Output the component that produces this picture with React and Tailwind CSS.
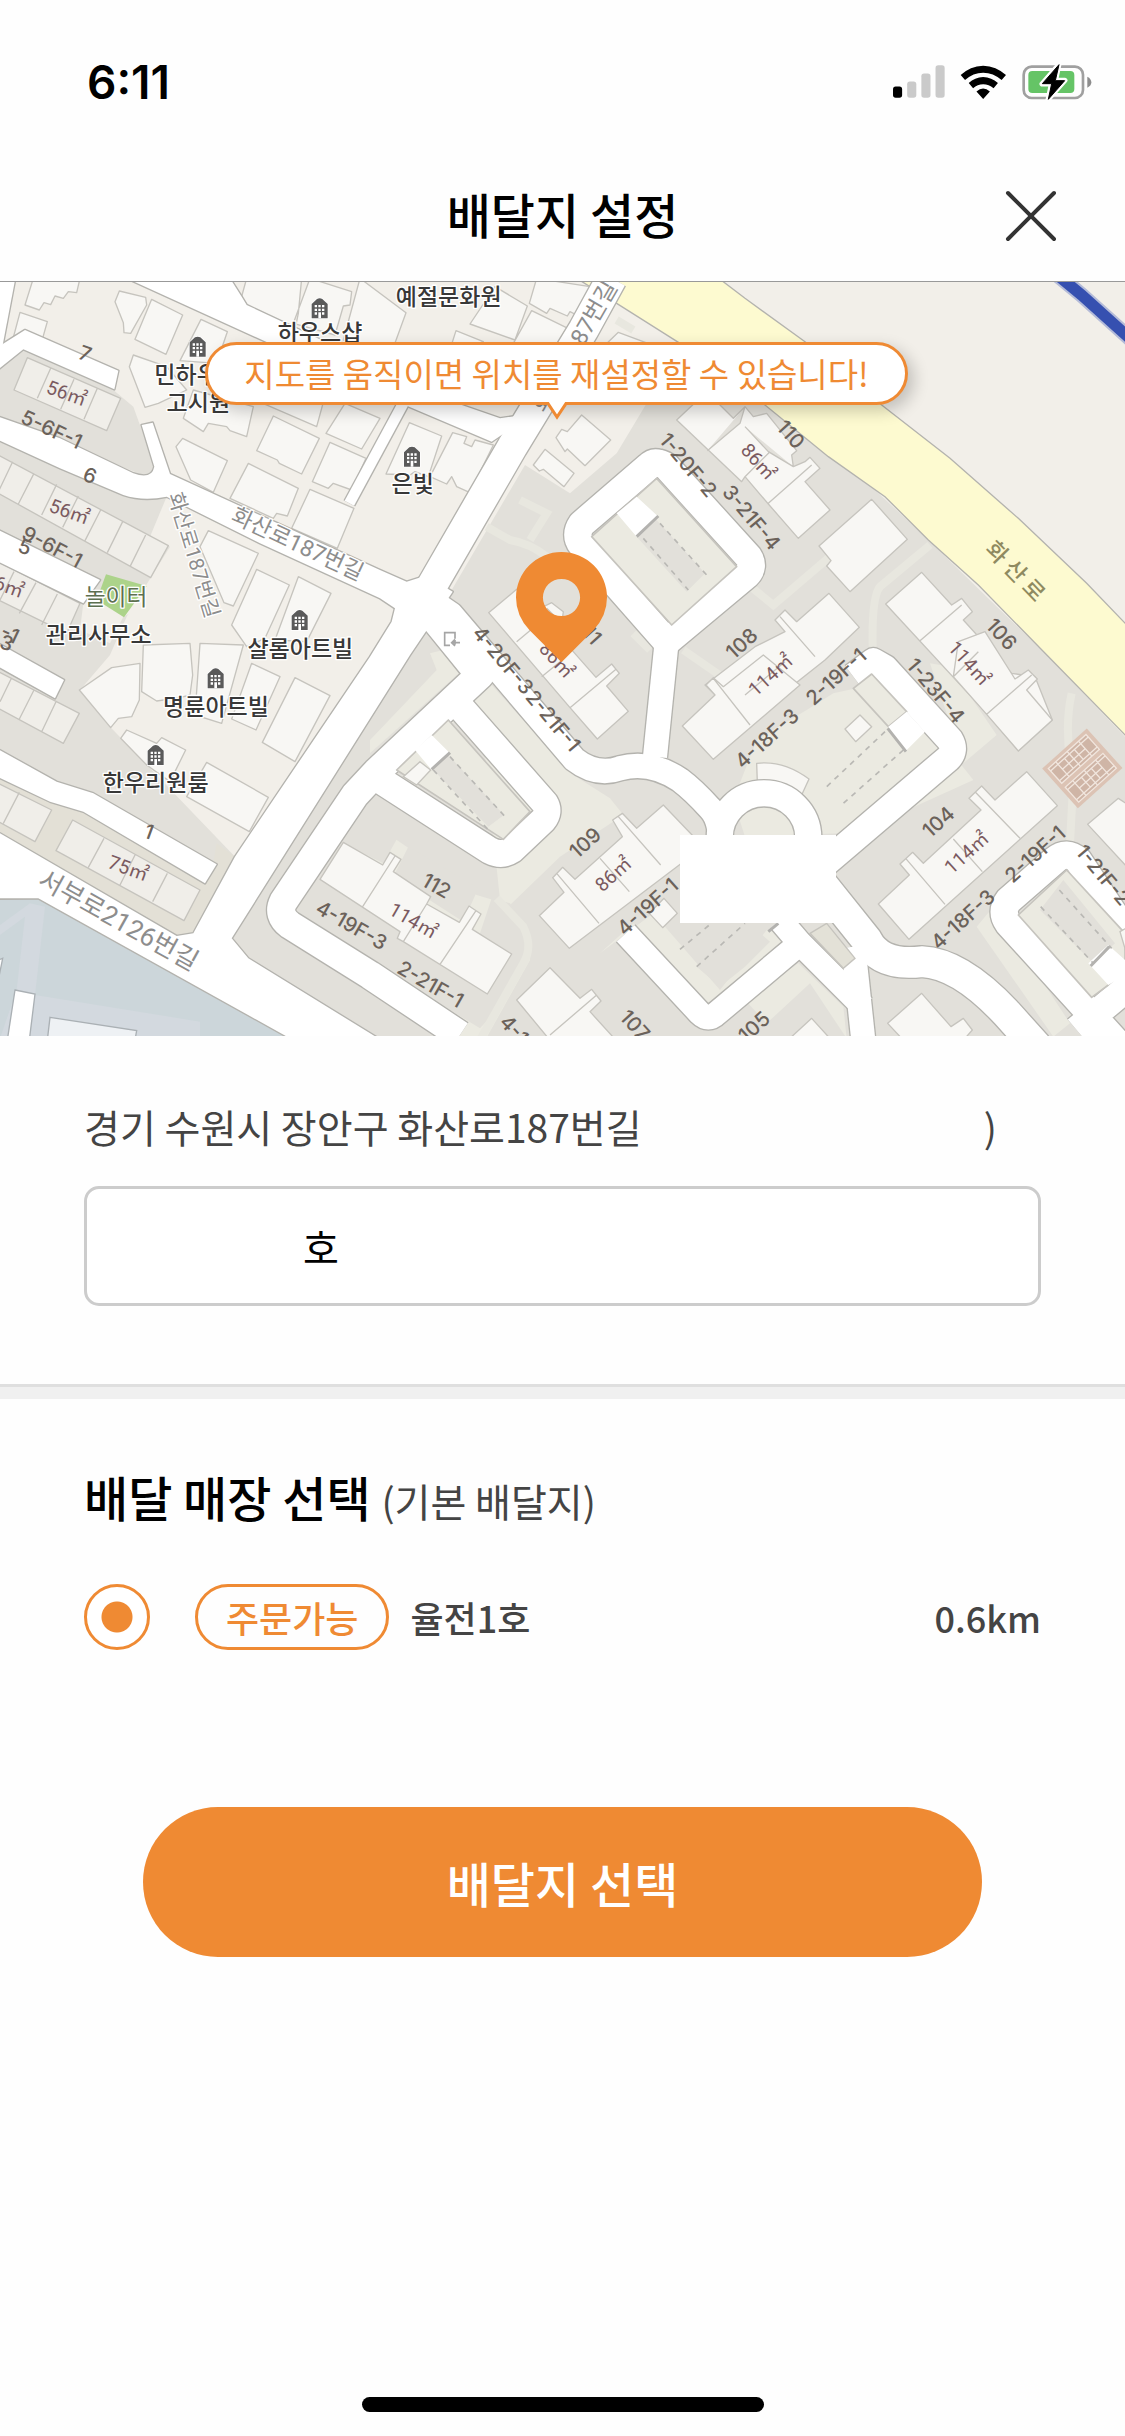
import React from "react";

const GROUND = "#e2e0da";
const GRASS = "#ebeae1";
const HOUSE = "#f8f7f4";
const FLAT = "#f0eee9";
const EDGE = "#c6c4be";
const ROAD_EDGE = "#b4b3ae";

/* Map drawing units are thirds of a pixel at full width. */

const roads = [
  { d: "M1835 -5L1750 150L1537 500L1300 910L1250 1000", w: 90 },
  { d: "M1185 985L1175 1025L1110 1130L705 1730L580 1960L530 1968L0 1660V1855L115 1855L870 2275H1135L745 2035L695 1975L1230 1125L1358 935L1300 900Z" },
  { d: "M-5 410L180 475L400 580Q455 600 463 560L425 435L458 428L510 582L1140 870L1220 905L1300 880L1270 1000L1185 985L1140 955L780 790L500 650Q430 665 370 645L180 565L-5 480Z" },
  { d: "M-5 200L75 150L355 272L343 328L70 208L-5 268Z" },
  { d: "M-5 750L300 900L250 970L-5 845Z" },
  { d: "M-5 1090L192 1200L165 1255L-5 1160Z" },
  { d: "M-5 1408L170 1505L280 1540L650 1753L615 1810L250 1595L150 1565L-5 1492Z" },
  { d: "M380 -5L1215 375L1475 485L1600 400L1500 415L1370 370L740 75L725 50L690 -5Z" },
  { d: "M1210 370L1048 670", w: 32 },
  { d: "M-5 -5H46L8 195L-5 205Z" },
  { d: "M1975 550Q1960 545 1945 560L1745 732Q1722 765 1745 795L2000 1085L2240 885Q2265 860 2245 830L2000 560Q1985 550 1975 550Z", w: 82 },
  { d: "M2000 1085L1965 1430", w: 72 },
  { d: "M1290 960L1353 1003L1723 1438Q1790 1490 1860 1465Q1950 1440 2040 1500Q2080 1530 2130 1585Q2165 1620 2162 1720", w: 73 },
  { d: "M1290 1000L1440 1185L1130 1475L1065 1545L850 1865Q830 1905 870 1935L1110 2085L1380 2265", w: 84 },
  { d: "M1380 1280L1635 1570Q1650 1595 1630 1620L1535 1710Q1505 1730 1470 1712L1140 1500", w: 80 },
  { d: "M2292 1540A133 133 0 0 0 2159 1673V1760M2292 1540A133 133 0 0 1 2425 1673V1760", w: 78 },
  { d: "M2560 1190L2620 1145L2655 1165L2850 1380Q2868 1410 2845 1435L2440 1780", w: 80 },
  { d: "M2440 1780L2600 1980Q2640 2060 2765 2045Q2880 2050 3020 2200L3110 2300", w: 92 },
  { d: "M2560 2000L2592 2300", w: 72 },
  { d: "M1877 1960L2100 2200Q2125 2225 2150 2200L2400 1990L2590 2180M2400 1990L2340 1920", w: 72 },
  { d: "M3440 2050L3235 1742Q3200 1710 3165 1740L3025 1862Q3000 1895 3025 1930L3380 2320M3230 2250L3420 2090", w: 82 },
];

const notches =
  "M1850 700L1910 650L1975 710L1910 770ZM1245 1410L1295 1365L1350 1420L1295 1470ZM2665 1340L2720 1295L2775 1355L2715 1415ZM3265 2050L3325 1995L3375 2040V2085L3325 2115Z";

/* Each sheet holds building outlines relative to its own corner. */
const sheets = [
  {
    x: 0, y: 0, fill: HOUSE,
    d: "M100 -5L75 75L118 90L132 68L152 74L165 48L190 55L205 35L230 38L240 -5ZM60 97L142 125L118 210L38 180ZM358 33L437 52L440 75L392 160L372 158L370 128L345 65ZM455 58L548 105L498 223L405 178ZM603 118L682 155L650 250L540 242ZM400 225L500 260L560 330L475 370L435 382L388 260ZM580 330L760 380L740 470L690 452L680 440L625 430L610 455L550 415ZM820 408L958 475L905 582L838 550L832 540L770 512ZM548 475L682 542L640 637L572 600L528 500ZM745 550L895 625L862 708L830 700L820 715L690 655ZM990 487L1098 535L1055 630L1000 610L985 625L937 605ZM930 628L1062 685L1012 805L875 745ZM1035 370L1140 415L1085 507L978 460ZM740 -5L722 60L730 75L885 148L895 100L905 -5ZM930 -5L1055 35L1050 75L1030 78L1005 165L880 130ZM1110 48L1160 60V280L1040 230ZM830 270L980 330L950 440L720 340ZM625 752L775 820L700 978L672 968L600 800ZM770 868L868 915L795 1075L740 1100L695 1035ZM895 890L993 940L920 1085L825 1080ZM590 -5L640 25L690 10L700 -5Z",
  },
  {
    x: 0, y: 0, fill: FLAT,
    d: "M82 233L362 355L320 452L42 330ZM152 265L112 355M222 298L182 388M292 325L252 418M-5 525L505 797L452 893L-5 640ZM38 545L-5 635M102 580L55 672M170 613L125 705M235 648L188 742M302 690L255 782M368 725L322 818M437 765L390 860M-5 845L240 970L200 1060L-5 960ZM42 875L0 960M108 908L58 1000M172 942L125 1035",
  },
  {
    x: 1110, y: 0, fill: HOUSE,
    d: "M-30 -5L108 98L60 230L-80 180ZM375 20L472 78L435 180L300 132ZM500 -5L660 20L620 105L600 95L592 108L540 85L530 100L478 70ZM485 92L600 148L560 215L430 190ZM258 152L340 185L230 240ZM745 157L860 200L700 200ZM635 405L722 480L645 557L592 507L585 515L558 473L575 448L592 455ZM525 508L612 580L582 620L520 568L508 573L490 555ZM118 428L215 468L175 590L135 575L120 585L48 582ZM248 458L290 470L282 490L305 500L315 480L370 495L300 638L260 620L245 590L230 612L180 590Z",
  },
  {
    x: 1110, y: 0, fill: HOUSE,
    d: "M920 420L1010 335L1090 415L1125 380L1150 410L1190 400L1280 512L1265 525L1270 560L1305 545L1320 532L1350 565L1305 605L1380 690L1285 775L1195 672L1125 590L1115 605ZM1012 512L1110 430L1125 380M1195 670L1325 555M1125 590L1200 515M1125 440L1195 515L1270 560",
  },
  {
    x: 1110, y: 780, fill: HOUSE,
    d: "M356 218L440 148L500 210L545 188L580 215L570 290L678 412L725 372L748 400L710 438L775 514L682 597L600 503ZM440 305L500 255M515 410L570 365M600 503L738 388M530 205L560 235",
  },
  {
    x: 2235, y: 0, fill: HOUSE,
    d: "M380 658L487 778L315 935L245 858L258 842L222 798ZM120 990L155 1025L252 940L343 1042L240 1140L0 1330L-120 1215L30 1100L120 1055L90 1020ZM530 877L620 975L650 955L682 995L655 1020L800 1180L870 1190L922 1320L820 1412L725 1300L422 972ZM525 1082L650 975M725 1302L845 1190M625 1190L720 1100M105 1010L210 1130M0 1180L125 1240M40 1140L120 1230",
  },
  {
    x: 0, y: 1125, fill: HOUSE,
    d: "M335 38L420 25L418 135L395 185L355 190L332 218L238 105ZM430 -30L570 -35L578 60L570 120L540 128L470 138L425 110ZM600 -35L730 -30L665 205L585 180ZM755 25L840 65L768 225L695 192ZM885 68L990 122L885 320L787 262ZM380 225L470 265L485 248L557 285L510 380L440 330L362 250ZM620 322L805 427L748 530L560 425Z",
  },
  {
    x: 0, y: 1125, fill: FLAT,
    d: "M-5 50L238 175L190 265L-5 160ZM35 68L0 140M102 105L58 192M168 140L125 230M-5 385L155 465L105 560L-5 500ZM58 412L10 505M218 495L600 705L552 797L168 587ZM312 550L265 637M405 600L360 690M502 655L458 740",
  },
  {
    x: 780, y: 1500, fill: HOUSE,
    d: "M250 187L368 255L390 217L423 238L400 275L512 350L500 372L598 427L627 378L663 402L637 448L755 522L682 642L430 485L412 475L420 455L180 298ZM405 228L308 380M500 372L430 485M648 392L540 553",
  },
  {
    x: 1110, y: 1125, fill: HOUSE,
    d: "M1060 95L1180 0L1290 90L1030 313L937 213L1035 120L1008 90L1030 68ZM1030 70L1140 210M728 495L757 475L800 520L880 450L1000 575L598 880L508 782L582 712L548 668L578 637L615 673L757 545ZM745 485L872 630M560 655L687 805M690 610L778 710M540 938L630 1030L665 1003L693 1038L660 1070L760 1180H560L440 1035ZM540 1140L680 1020M882 730L922 775L878 818L838 775Z",
  },
  {
    x: 2235, y: 1125, fill: HOUSE,
    d: "M345 180L380 215L332 260L300 222ZM35 325Q115 315 192 372L170 420Q110 380 37 382ZM672 430L710 393L750 435L845 350L937 452L492 853L400 747L493 660L465 627L503 592L535 625L708 465ZM690 410L825 550M482 610L600 748M625 552L712 650M1120 430L1150 450V640L1028 508ZM530 1015L618 1115L655 1090L682 1125L660 1150H470L428 1105ZM200 1090L250 1145H140ZM640 -40L720 -70L810 72L850 45L877 72L845 105L922 195L820 288L725 178L625 65ZM725 178L860 60M625 65L700 -10M0 120L120 20",
  },
];

const dashes =
  "M1980 730L2120 885M1930 775L2065 930M1350 1430L1520 1615M1300 1470L1470 1655M2655 1355L2480 1520M2710 1410L2530 1570M2040 2008L2140 1925M2090 2060L2235 1930M3178 1830L3335 2005M3122 1880L3280 2050";

const barriers = "M1910 770L1975 708M1295 1468L1350 1418M2663 1345L2718 1415M3272 2058L3328 2000M2305 1955L2335 1930";

const places = [
  { t: "예절문화원", x: 1346, y: 74 },
  { t: "하우스샵", x: 960, y: 182 },
  { t: "민하우스", x: 590, y: 310 },
  { t: "고시원", x: 595, y: 392 },
  { t: "은빛", x: 1238, y: 637 },
  { t: "관리사무소", x: 296, y: 1090 },
  { t: "샬롬아트빌", x: 901, y: 1131 },
  { t: "명륜아트빌", x: 648, y: 1304 },
  { t: "한우리원룸", x: 467, y: 1534 },
];

const numbers = [
  { t: "7", x: 256, y: 220, r: 20 },
  { t: "6", x: 270, y: 586, r: 20 },
  { t: "5", x: 75, y: 800, r: 20 },
  { t: "3", x: 20, y: 1088, r: 20 },
  { t: "1", x: 447, y: 1655, r: 20 },
  { t: "5-6F-1", x: 155, y: 448, r: 25 },
  { t: "9-6F-1", x: 157, y: 800, r: 28 },
  { t: "-1", x: 30, y: 1062, r: 25 },
  { t: "110", x: 2373, y: 463, r: 48 },
  { t: "106", x: 3005, y: 1062, r: 48 },
  { t: "108", x: 2225, y: 1090, r: -42 },
  { t: "111", x: 1768, y: 1055, r: 48 },
  { t: "109", x: 1755, y: 1688, r: -42 },
  { t: "104", x: 2815, y: 1625, r: -42 },
  { t: "112", x: 1310, y: 1817, r: 30 },
  { t: "107", x: 1905, y: 2235, r: 48 },
  { t: "105", x: 2262, y: 2240, r: -42 },
  { t: "1-20F-2", x: 2065, y: 555, r: 50 },
  { t: "3-21F-4", x: 2255, y: 712, r: 50 },
  { t: "4-20F-3", x: 1510, y: 1140, r: 50 },
  { t: "2-21F-1", x: 1660, y: 1322, r: 50 },
  { t: "4-18F-3", x: 2300, y: 1375, r: -42 },
  { t: "2-19F-1", x: 2508, y: 1190, r: -42 },
  { t: "1-23F-4", x: 2808, y: 1232, r: 50 },
  { t: "4-19F-1", x: 1942, y: 1880, r: -42 },
  { t: "4-19F-3", x: 1055, y: 1935, r: 30 },
  { t: "2-21F-1", x: 1292, y: 2112, r: 30 },
  { t: "4-18F-3", x: 2888, y: 1918, r: -42 },
  { t: "2-19F-1", x: 3105, y: 1722, r: -42 },
  { t: "1-21F-2", x: 3310, y: 1785, r: 50 },
  { t: "4-19F-3", x: 1590, y: 2300, r: 48 },
];

const areas = [
  { t: "56㎡", x: 200, y: 340, r: 20 },
  { t: "56㎡", x: 208, y: 695, r: 20 },
  { t: "56㎡", x: 12, y: 915, r: 20 },
  { t: "75㎡", x: 385, y: 1765, r: 20 },
  { t: "86㎡", x: 2275, y: 545, r: 48 },
  { t: "86㎡", x: 1670, y: 1140, r: 48 },
  { t: "86㎡", x: 1840, y: 1782, r: -42 },
  { t: "114㎡", x: 1240, y: 1922, r: 30 },
  { t: "114㎡", x: 2312, y: 1185, r: -42 },
  { t: "114㎡", x: 2908, y: 1150, r: 48 },
  { t: "114㎡", x: 2900, y: 1718, r: -42 },
];

const streets = [
  { t: "화산로187번길", x: 892, y: 793, r: 25, s: 68 },
  { t: "화산로187번길", x: 582, y: 825, r: 73, s: 62 },
  { t: "화산로187번길", x: 1725, y: 200, r: -60, s: 70 },
  { t: "서부로2126번길", x: 353, y: 1925, r: 29, s: 78 },
];

const markers = [[593, 200], [959, 85], [899, 1020], [1236, 530], [647, 1195], [467, 1425]];

function MapArt() {
  return (
    <svg
      viewBox="0 6 3375 2262"
      className="block w-full font-['Roboto','Noto_Sans_CJK_KR',sans-serif]"
      role="img"
      aria-label="배달지 지도"
    >
      <rect width="3375" height="2280" fill="#f2efe9" />
      <path fill={GROUND} d="M0 265L70 210L340 330L400 380L465 560L440 590L0 410ZM0 480L500 650L450 770L510 800L452 893L380 1010L330 1125L240 1230L330 1340L705 1730L580 1960L530 1970L0 1660Z" />
      <path fill="#e3e0d6" d="M0 1480L280 1540L640 1750L650 1690L705 1730L580 1960L530 1970L0 1660Z" />
      <path fill="#f2efe9" d="M250 970L360 905L500 940L370 1010L330 1090L240 1050Z" />
      <path fill={GROUND} d="M1940 370L1850 520L1710 640L1575 555L1355 930L1230 1125L695 1975L745 2035L1150 2280H3375V1370L3140 1125L2785 780L2615 620L2295 375L2040 190Z" />
      <path fill={GRASS} d="M1470 1210L1720 1485L1830 1555L1870 1605L1680 1730L1530 1875L1430 1845L1220 1700L1110 1625L900 2000L1400 2290H1450L1590 2040L1570 1930L1500 1860L1440 1280L1100 1480L1200 1380L1320 1280L1400 1180Z" />
      <path fill={GRASS} d="M1110 1380L1310 1170L1290 1120L1330 1110L1410 1150L1110 1420Z" />
      <path fill={GROUND} d="M1080 1600L1192 1675L1150 1750L1030 1690ZM1225 1700L1435 1825L1390 1925L1180 1790ZM1475 1855L1530 1870L1590 1960L1570 2040L1500 2180L1440 2245L880 1900L960 1800L1440 1960Z" />
      <path fill={GRASS} d="M2270 1380L2420 1290L2500 1240L2590 1220L2830 1400L2520 1660L2235 1670L2200 1560ZM2890 1450L2990 1365L2850 1160L2790 1150ZM1800 2020L1900 1930L2120 2180L2380 1960L2300 1950L2160 2130L1960 1900ZM2930 1940L2980 1880L3210 2230L3160 2270ZM2650 1650L2700 1600L2920 1500L2880 1450L2700 1600ZM2235 2160L2395 2050L2530 2180L2540 2275L2430 2110L2300 2230Z" />
      <path fill="none" stroke="#e8e7df" strokeWidth="24" d="M1460 740L1530 780Q1590 790 1640 830L1740 900M1560 660L1640 700L1590 780M2240 910L2320 975L2490 830M2790 795L2640 920Q2615 950 2618 1100M1850 120L1900 150M1490 1855L1570 1940Q1600 2000 1570 2050L1440 2280M3215 1240Q3190 1350 3220 1500L3210 1690M1950 1110L1900 1060M2050 1110L2180 1200" />
      <path fill="#fdfad0" stroke={ROAD_EDGE} strokeWidth="4" d="M1730 -5L1850 70L2040 190L2295 375L2485 530L2655 650L2785 780L2935 915L3150 1135L3390 1380V1045L3260 910L3055 715L2850 535L2645 375L2415 185L2235 55L2150 -10Z" />
      <path fill="none" stroke="#b4bbd8" strokeWidth="46" d="M3172 -15L3245 45L3400 185" />
      <path fill="none" stroke="#3650b0" strokeWidth="34" d="M3172 -15L3245 45L3400 185" />

      <path fill="#ccd6da" stroke={ROAD_EDGE} strokeWidth="4" d="M-5 1858L115 1855L880 2275H-5Z" />
      <path fill="#d3d9df" d="M0 1935L90 1870L135 1880L105 2145L600 2225V2275H0L50 2130L75 1910L0 1965Z" />
      <path fill="#ffffff" stroke="#aab0b4" strokeWidth="4" d="M45 2130L105 2142L88 2280H22ZM-5 2040L8 2035L-5 2100Z" />
      <path fill="#eef1f4" stroke="#aab0b4" strokeWidth="4" d="M150 2212L410 2252L405 2280H142Z" />

      {sheets.map((s, i) => (
        <g key={i} transform={`translate(${s.x} ${s.y})`}>
          <path d={s.d} fill={s.fill} stroke={EDGE} strokeWidth="4" strokeLinejoin="round" />
        </g>
      ))}
      <path fill="#acd38a" d="M318 883L440 918L372 1012L290 960Z" />

      <g strokeLinejoin="round">
        {roads.map((r, i) => (
          <path key={i} d={r.d} fill={r.w ? "none" : "#fff"} stroke={ROAD_EDGE} strokeWidth={r.w ? r.w + 8 : 8} />
        ))}
        {roads.map((r, i) => (
          <path key={i} d={r.d} fill={r.w ? "none" : "#fff"} stroke="#fff" strokeWidth={r.w || 0} />
        ))}
      </g>
      <path fill={GRASS} stroke={EDGE} strokeWidth="5" strokeLinejoin="round" d="M1970 595L2210 860L2015 1035L1775 770ZM1345 1320L1590 1595L1510 1678L1190 1470ZM2615 1182L2720 1295L2665 1340L2560 1225ZM3200 1770L3375 1960V2070L3325 2115L3275 2152L3055 1905Z" />
      <path fill={GROUND} d="M1965 715L2115 880L2060 935L1910 770ZM1345 1425L1512 1605L1465 1640L1300 1470ZM2235 2060L2310 1985L2275 1955H2170L2090 2060L2160 2120ZM3190 1800L3345 1990L3280 2050L3120 1890Z" />
      <path fill="#e3e1d7" stroke={EDGE} strokeWidth="4" d="M2430 1960L2480 1930L2565 2035L2530 2065Z" />
      <path fill="#fff" d={notches} />
      <path fill={HOUSE} stroke={EDGE} strokeWidth="4" d="M1260 1445L1292 1470L1250 1515L1210 1490ZM3360 1955L3385 1940V2040Z" />
      <path fill="none" stroke="#b9b8b4" strokeWidth="5" strokeDasharray="16 16" d={dashes} />
      <path fill="none" stroke="#b3b2af" strokeWidth="9" d={barriers} />

      <g transform="translate(3247 1465) rotate(-42)">
        <rect x="-90" y="-80" width="180" height="160" fill="#dcc3b4" />
        <g fill="#cfb5a6" stroke="#f1e6de" strokeWidth="4">
          {[-68, 8].map((y) => (
            <g key={y}>
              <rect x="-76" y={y} width="152" height="60" />
              <path d={`M-76 ${y + 10}h152m0 40h-152M-46 ${y}v60M46 ${y}v60M-20 ${y + 10}v40M20 ${y + 10}v40M0 ${y}v60M-46 ${y + 30}h92`} />
            </g>
          ))}
        </g>
      </g>
      <path fill="none" stroke="#a5a5a5" strokeWidth="5" d="M1365 1076V1058H1334V1096H1350M1365 1094V1080M1380 1088H1357M1365 1078L1355 1088L1365 1098" />

      <rect x="2040" y="1665" width="468" height="264" fill="#fff" />

      <g textAnchor="middle" stroke="#fff" strokeWidth="8" strokeLinejoin="round" paintOrder="stroke">
        {streets.map((l, i) => (
          <text key={i} transform={`translate(${l.x} ${l.y}) rotate(${l.r})`} dy="22" fontSize={l.s} fill="#8d8d8d">{l.t}</text>
        ))}
        <text x="348" y="974" fontSize="68" fill="#5d7050">놀이터</text>
        {places.map((l) => (
          <text key={l.t} x={l.x} y={l.y} fontSize="69" fontWeight="500" fill="#383838">{l.t}</text>
        ))}
      </g>
      <g textAnchor="middle">
        <g fontSize="61" fill="#6b625a" fontWeight="500" className="font-['Inter',sans-serif]">
          {numbers.map((l, i) => (
            <text key={i} transform={`translate(${l.x} ${l.y}) rotate(${l.r})`} dy="22">{l.t}</text>
          ))}
        </g>
        <g fontSize="58" fill="#7a5a60">
          {areas.map((l, i) => (
            <text key={i} transform={`translate(${l.x} ${l.y}) rotate(${l.r})`} dy="20">{l.t}</text>
          ))}
        </g>
        <text transform="translate(3045 875) rotate(46)" dy="22" fontSize="68" fontWeight="500" fill="#8f8a60">화 산 로</text>
      </g>
      {markers.map(([x, y]) => (
        <g key={`${x}-${y}`} transform={`translate(${x - 24} ${y - 30})`}>
          <path fill="#5a5a5a" stroke="#fff" strokeWidth="4" paintOrder="stroke" d="M0 17L16 2Q24 -2 32 2L48 17V60H0Z" />
          <path fill="#fff" d="M9 20h7v7h-7zM20 20h7v7h-7zM31 20h7v7h-7zM9 31h7v7h-7zM20 31h7v7h-7zM31 31h7v7h-7zM9 42h7v7h-7zM31 42h7v7h-7zM20 42h8v18h-8z" />
        </g>
      ))}
    </svg>
  );
}

function StatusBar() {
  return (
    <div className="flex h-[150px] items-center justify-between pt-[14px] pr-[33px] pl-[87px]">
      <span className="font-['Inter',sans-serif] text-[46px] leading-none font-semibold text-black">6:11</span>
      <div className="flex items-center gap-[15px]">
        <svg viewBox="69 77 154 98" className="w-[52px]" aria-hidden="true">
          <rect x="69" y="141" width="27" height="33" rx="8" />
          <g fill="#cacaca">
            <rect x="111" y="126" width="27" height="48" rx="8" />
            <rect x="153" y="102" width="27" height="72" rx="8" />
            <rect x="195" y="78" width="27" height="96" rx="8" />
          </g>
        </svg>
        <svg viewBox="270 73 140 102" className="w-[47px]" aria-hidden="true">
          <path d="M339 75Q378 76 407 103L394 118Q369 96 339 96T285 118L272 103Q300 76 339 75ZM339 109Q364 110 383 127L370 142Q356 130 339 130T309 142L296 127Q314 110 339 109ZM339 143Q349 143 359 152L339 174L319 152Q329 143 339 143Z" />
        </svg>
        <svg viewBox="455 72 210 109" className="w-[70px]" aria-hidden="true">
          <rect x="460" y="80" width="178" height="94" rx="24" fill="none" stroke="#a0a0a0" strokeWidth="8" />
          <path d="M651 110Q663 116 663 127T651 143Z" fill="#8d8d8d" />
          <rect x="474" y="93" width="138" height="66" rx="12" fill="#65c466" />
          <path d="M566 73L515 132H543L533 179L584 121H556Z" stroke="#fff" strokeWidth="15" strokeLinejoin="round" />
          <path d="M566 74L516 131H544L534 178L583 122H555Z" stroke="#000" strokeWidth="3" strokeLinejoin="round" />
        </svg>
      </div>
    </div>
  );
}

export default function App() {
  return (
    <main className="flex min-h-screen flex-col bg-[#fefefe] font-['Noto_Sans_CJK_KR',sans-serif] text-[#444]">
      <StatusBar />
      <header className="grid h-[132px] grid-cols-[1fr_auto_1fr] items-center border-b border-[#999] px-[68px]">
        <h1 className="col-start-2 pb-[6px] text-[48px] leading-[72px] font-medium text-black">배달지 설정</h1>
        <button type="button" aria-label="닫기" className="justify-self-end">
          <svg viewBox="0 0 52 52" className="size-[52px]" fill="none" stroke="#333" strokeWidth="4" strokeLinecap="round" aria-hidden="true">
            <path d="M3 3L49 49M49 3L3 49" />
          </svg>
        </button>
      </header>

      <section className="relative overflow-hidden">
        <MapArt />
        <div className="absolute inset-x-0 top-[60px] flex justify-center pr-[12px]">
          <div className="relative flex h-[63px] items-center rounded-full border-[3px] border-[#ef8a33] bg-white px-[36px] pb-[2px] shadow-[6px_6px_16px_rgba(0,0,0,0.2)]">
            <p className="text-[33px] leading-[48px] whitespace-nowrap text-[#ef8a33]">지도를 움직이면 위치를 재설정할 수 있습니다!</p>
            <svg viewBox="0 0 22 19" className="absolute top-full left-1/2 w-[22px] -translate-x-1/2" aria-hidden="true">
              <path d="M1 0L11 15L21 0" fill="#fff" stroke="#ef8a33" strokeWidth="3" />
            </svg>
          </div>
        </div>
        <div className="absolute inset-x-0 top-[270px] flex justify-center pr-[2px]">
          <svg viewBox="0 0 274 332" className="w-[91px]" aria-hidden="true">
            <path fillRule="evenodd" fill="#ef8a33" d="M137 0A137 137 0 0 1 274 137Q274 192 233 236L137 332L41 236Q0 192 0 137A137 137 0 0 1 137 0ZM137 81A56 56 0 1 0 137 193A56 56 0 1 0 137 81Z" />
          </svg>
        </div>
      </section>

      <section className="px-[84px] pt-[61px] pb-[78px]">
        <label htmlFor="detail" className="flex justify-between pr-[44px] text-[39px] leading-[58px]">
          <span>경기 수원시 장안구 화산로187번길</span>
          <span>)</span>
        </label>
        <input
          id="detail"
          type="text"
          defaultValue="호"
          className="mt-[31px] block h-[120px] w-full rounded-[15px] border-[3px] border-[#ccc] bg-white pr-[30px] pl-[216px] text-[39px] text-black"
        />
      </section>

      <div className="h-[15px] border-t-[3px] border-[#dfdfdf] bg-[#f0f0f0]" />

      <section className="px-[84px] pt-[61px]">
        <h2 className="text-[48px] leading-[72px] font-medium text-black">
          배달 매장 선택 <span className="text-[39px] leading-none font-normal text-[#444]">(기본 배달지)</span>
        </h2>
        <label className="mt-[52px] flex items-center text-[36px] leading-[54px] font-medium">
          <input
            type="radio"
            name="store"
            defaultChecked
            className="mr-[45px] size-[66px] appearance-none rounded-full border-[3px] border-[#ef8a33] bg-white bg-[radial-gradient(circle,#ef8a33_15px,transparent_16px)]"
          />
          <span className="flex h-[66px] items-center rounded-full border-[3px] border-[#ef8a33] px-[28px] text-[#ef8a33]">주문가능</span>
          <span className="ml-[21px]">율전1호</span>
          <span className="ml-auto">0.6km</span>
        </label>
      </section>

      <div className="mt-[157px] px-[143px]">
        <button type="button" className="h-[150px] w-full rounded-full bg-[#ef8a33] text-[48px] font-medium text-white">배달지 선택</button>
      </div>

      <div className="mx-auto mt-auto mb-[24px] h-[15px] w-[402px] rounded-full bg-black" />
    </main>
  );
}
